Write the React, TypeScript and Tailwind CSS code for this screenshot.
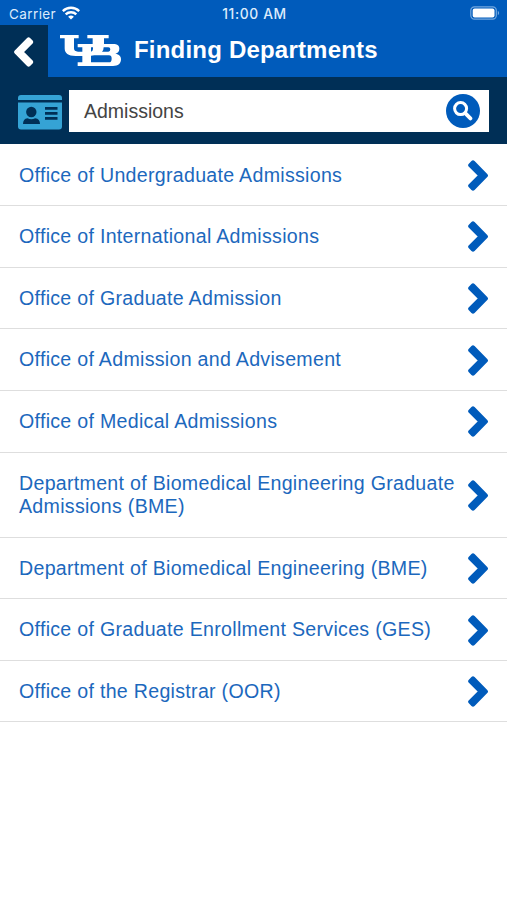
const departments = [
  "Office of Undergraduate Admissions",
  "Office of International Admissions",
  "Office of Graduate Admission",
  "Office of Admission and Advisement",
  "Office of Medical Admissions",
  "Department of Biomedical Engineering Graduate Admissions (BME)",
  "Department of Biomedical Engineering (BME)",
  "Office of Graduate Enrollment Services (GES)",
  "Office of the Registrar (OOR)",
];

function WifiIcon() {
  return (
    <svg viewBox="0 0 18 14" className="h-[14px] w-[18px]" fill="none" stroke="currentColor" strokeWidth="2.4">
      <path d="M.8 5.1a11.8 11.8 0 0 1 16.4 0" />
      <path d="M3.7 8.3a7.7 7.7 0 0 1 10.6 0" />
      <path d="M9 13.6 6.1 10.8a4.2 4.2 0 0 1 5.8 0Z" fill="currentColor" stroke="none" />
    </svg>
  );
}

function ChevronIcon({ className }: { className: string }) {
  return (
    <svg viewBox="0 0 20 31" className={className} fill="currentColor" stroke="currentColor" strokeWidth="4.4" strokeLinejoin="round">
      <path d="M2.4 5.2 5 2.6 17.7 15.5 5 28.4 2.4 25.8 12.7 15.5Z" />
    </svg>
  );
}

function IdCardIcon() {
  return (
    <svg viewBox="0 0 44 35" className="h-[35px] w-[44px]">
      <path d="M0 5V3Q0 0 3 0H41Q44 0 44 3V5Z" fill="#35a3d5" />
      <path d="M0 7.5H44V31.5Q44 34.5 41 34.5H3Q0 34.5 0 31.5Z" fill="#35a3d5" />
      <g fill="#002f56">
        <circle cx="13.3" cy="17" r="5.2" />
        <path d="M5 29Q5 24 9.5 23.3Q13.3 25.3 17.2 23.3Q22 24 22 29Z" />
        <path d="M27 12H39.5V14.7H27ZM27 17H39.5V19.7H27ZM27 22H39.5V24.7H27Z" />
      </g>
    </svg>
  );
}

function SearchIcon() {
  return (
    <svg viewBox="0 0 20 20" className="size-[20px]" fill="none" stroke="currentColor">
      <circle cx="7.6" cy="7.6" r="6" strokeWidth="3" />
      <path d="m12.2 12.2 5.2 5.2" strokeWidth="3.8" strokeLinecap="round" />
    </svg>
  );
}

function StatusBar() {
  return (
    <div className="grid h-[25px] grid-cols-3 items-center pt-[3px] pr-[7px] pl-[9px] font-[Inter,sans-serif] text-[13.5px] leading-none text-[#dcebfb]">
      <div className="flex items-center gap-[6px]">
        <span className="pt-px tracking-[0.4px]">Carrier</span>
        <span className="-mt-[2px] text-white"><WifiIcon /></span>
      </div>
      <div className="pt-px text-center text-[13.8px] font-medium tracking-[0.65px] whitespace-nowrap">11:00 AM</div>
      <svg viewBox="0 0 30 14" className="-mt-[3px] h-[14px] w-[30px] justify-self-end">
        <rect x=".8" y=".8" width="25.5" height="12.4" rx="3.6" fill="none" stroke="#73a8df" strokeWidth="1.2" />
        <rect x="2.7" y="2.6" width="21.8" height="8.8" rx="2" fill="white" />
        <path d="M27.8 5v4c1.7-.5 1.7-3.5 0-4Z" fill="#73a8df" />
      </svg>
    </div>
  );
}

function UbLogo() {
  return (
    <svg viewBox="0 0 183 93" className="h-[31px] w-[61px]" fill="white">
      <path d="M0 0H56V10H42V40Q42 50 54 50H67V37H53V27H98V10H82V0H146V10H132V27H158C174 27 178 33 178 41C178 49 174 53 166 56C178 58 183 64 183 73C183 86 175 93 159 93H53V82H67V63H47C24 63 14 55 14 40V10H0Z" />
      <path d="M93 37H99V42Q99 49 93 50Z" fill="#005bbb" />
      <path d="M131 37H145Q151 37 151 43Q151 50 145 50H126Q131 46 131 37Z" fill="#005bbb" />
      <path d="M93 62Q98 62 103 61H147Q155 61 155 71Q155 82 147 82H93Z" fill="#005bbb" />
    </svg>
  );
}

export default function App() {
  return (
    <main className="flex h-[900px] w-[507px] flex-col overflow-hidden bg-white font-['Liberation_Sans',Arial,sans-serif]">
      <header className="h-[77px] shrink-0 bg-[#005bbb]">
        <StatusBar />
        <div className="flex h-[52px] items-center text-white">
          <button aria-label="Back" className="flex h-full w-[47.5px] items-center justify-center bg-[#002f56]">
            <ChevronIcon className="mt-[2px] h-[30px] w-[19.5px] rotate-180" />
          </button>
          <div className="-mt-px pl-[12.5px]"><UbLogo /></div>
          <h1 className="-mt-[2px] pl-[13px] text-[24px] font-bold tracking-[0.2px]">Finding Departments</h1>
        </div>
      </header>

      <div className="flex h-[67px] shrink-0 items-center bg-[#002f56] pr-[18px] pl-[18px]">
        <div className="mt-[3px]"><IdCardIcon /></div>
        <div className="ml-[7px] flex h-[42px] flex-1 items-center justify-between bg-white pr-[9px] pl-[15px]">
          <span className="pt-[2px] text-[19.5px] text-[#444]">Admissions</span>
          <button aria-label="Search" className="flex size-[34px] items-center justify-center rounded-full bg-[#005bbb] text-white">
            <SearchIcon />
          </button>
        </div>
      </div>

      <ul className="pt-[0.6px]">
        {departments.map((name) => (
          <li key={name} className="flex min-h-[61.6px] items-center justify-between border-b border-[#dedede] pt-[19px] pb-[18.1px] pr-[19px] pl-[19px] text-[#005bbb]">
            <span className="w-[440px] shrink-0 text-[19.6px] leading-[23.5px] tracking-[0.29px] text-[#1c68bd]">{name}</span>
            <ChevronIcon className="-my-2 h-[31px] w-[20px] shrink-0" />
          </li>
        ))}
      </ul>
    </main>
  );
}
